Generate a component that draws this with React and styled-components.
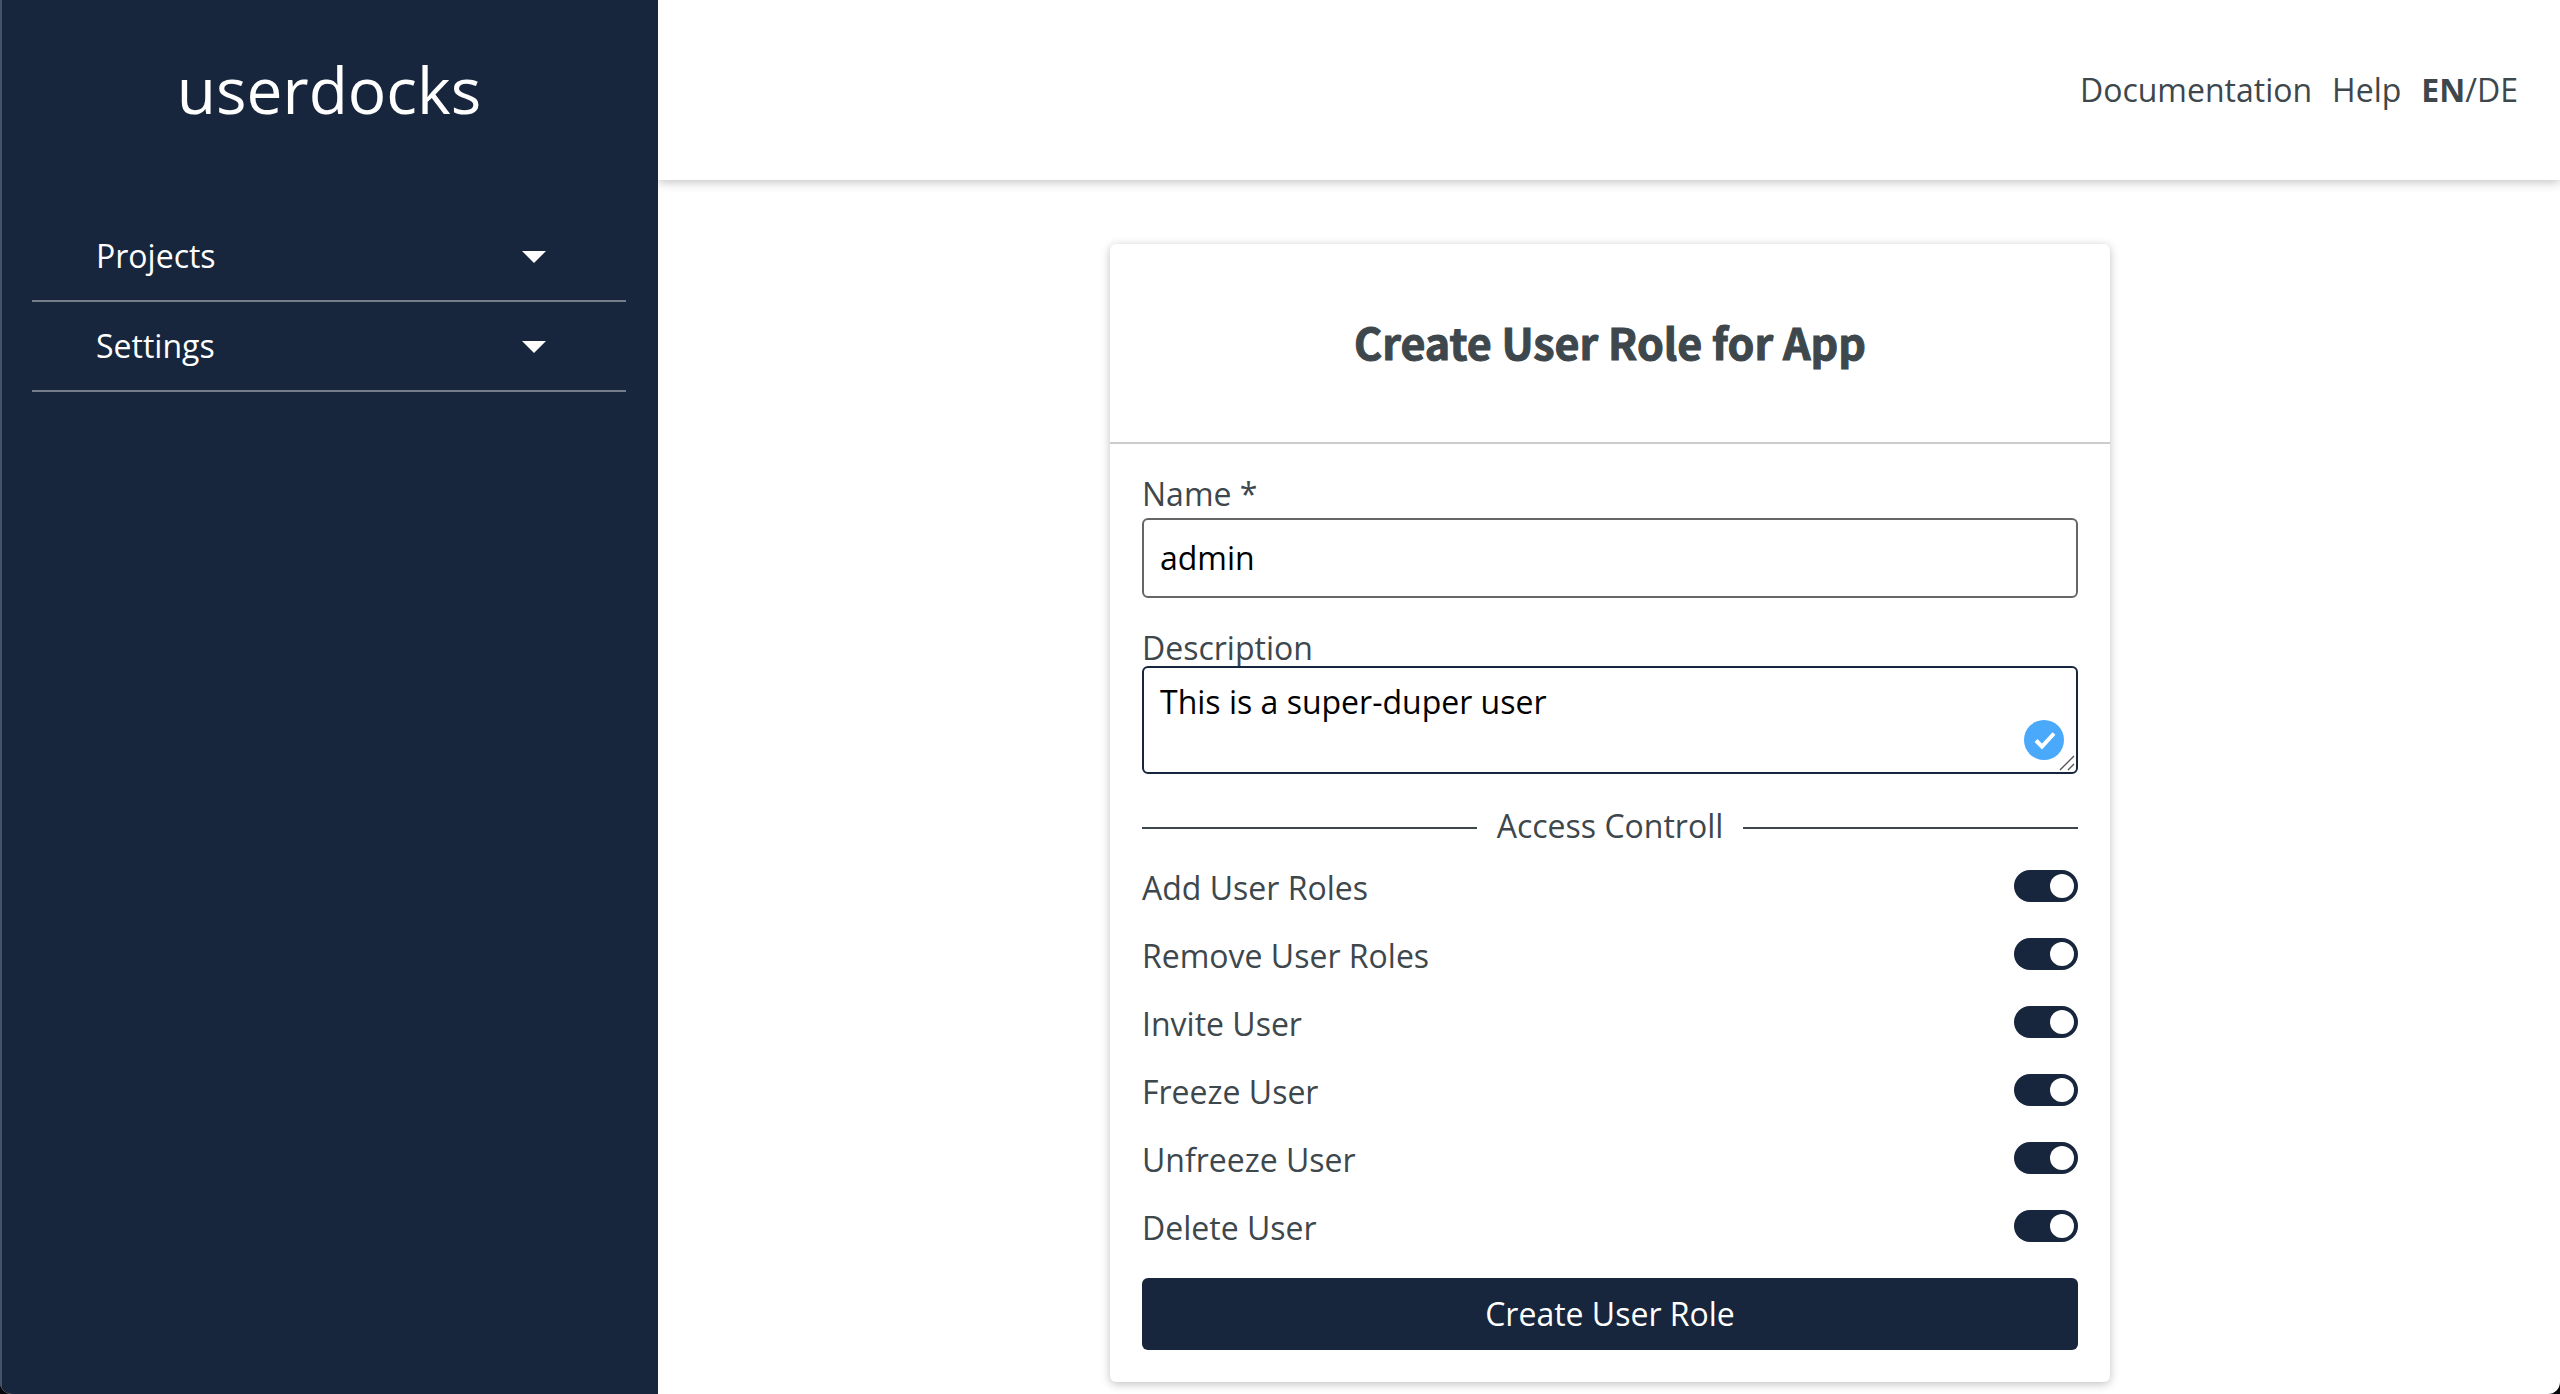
import React, { useId, useState } from "react";
import styled, { createGlobalStyle } from "styled-components";

const navy = "#17263c";
const slate = "#3d474c";

const GlobalStyle = createGlobalStyle`
  *, *::before, *::after { box-sizing: border-box; }
  body {
    margin: 0;
    background: #05070c;
    color: ${slate};
    font-family: "Open Sans", "Noto Sans", sans-serif;
    font-size: 32px;
    line-height: 44px;
  }
  button, input, textarea { font: inherit; }
`;

const Page = styled.div`
  display: grid;
  grid-template-columns: 658px 1fr;
  min-height: 100vh;
  overflow: hidden;
  border-radius: 0 0 12px 12px;
  background: #fff;
`;

const Sidebar = styled.aside`
  background: ${navy};
  border-left: 2px solid #465265;
  padding: 0 32px 0 30px;
  color: #fff;
`;

const Logo = styled.a`
  display: flex;
  align-items: center;
  justify-content: center;
  height: 180px;
  margin-bottom: 32px;
  font-size: 64px;
  color: #fff;
  text-decoration: none;
`;

const NavItem = styled.button`
  display: flex;
  align-items: center;
  justify-content: space-between;
  width: 100%;
  height: 90px;
  padding: 0 80px 0 64px;
  border: 0;
  border-bottom: 2px solid #747d8a;
  background: none;
  color: #fff;
  cursor: pointer;
`;

const Caret = styled.span`
  margin-top: 2px;
  border: 12px solid transparent;
  border-top-color: #fff;
  border-bottom-width: 0;
`;

const Content = styled.div`
  display: flex;
  flex-direction: column;
  min-width: 0;
`;

const Header = styled.header`
  display: flex;
  align-items: center;
  justify-content: flex-end;
  gap: 20px;
  height: 180px;
  padding: 0 42px;
  box-shadow: 0 2px 10px rgba(0, 0, 0, 0.25);
  clip-path: inset(0 0 -20px 0);
`;

const HeaderLink = styled.a`
  color: inherit;
  text-decoration: none;
`;

const LanguageButton = styled.button`
  padding: 0;
  border: 0;
  background: none;
  color: inherit;
  font-weight: ${(p) => (p.$active ? 700 : 400)};
  cursor: pointer;
`;

const Main = styled.main`
  display: flex;
  justify-content: center;
  padding: 64px 32px 12px 34px;
`;

const Card = styled.form`
  width: 1000px;
  max-width: 100%;
  border-radius: 6px;
  box-shadow: 0 2px 10px rgba(0, 0, 0, 0.25);
`;

const CardHeader = styled.div`
  display: flex;
  align-items: center;
  justify-content: center;
  height: 200px;
  padding-bottom: 4px;
  border-bottom: 2px solid #ccc;
`;

const Title = styled.h1`
  margin: 0;
  font-family: "Noto Sans CJK SC", sans-serif;
  font-size: 43px;
  line-height: 64px;
  font-weight: 700;
  -webkit-text-stroke: 1px ${slate};
`;

const CardBody = styled.div`
  display: flex;
  flex-direction: column;
  padding: 28px 32px 32px;
`;

const Label = styled.label`
  height: ${(p) => p.$height}px;
`;

const TextInput = styled.input`
  height: 80px;
  margin-bottom: 28px;
  padding: 0 16px 2px;
  border: 2px solid #666;
  border-radius: 6px;
  background: #fff;
  color: #000;
  outline: 0;
`;

const TextAreaWrap = styled.div`
  position: relative;
  display: flex;
`;

const TextArea = styled.textarea`
  width: 100%;
  height: 108px;
  padding: 12px 16px;
  border: 2px solid ${navy};
  border-radius: 6px;
  background: #fff;
  color: #000;
  outline: 0;
  resize: none;
`;

const CheckBadge = styled.svg`
  position: absolute;
  right: 14px;
  bottom: 14px;
  width: 40px;
  height: 40px;
`;

const Grip = styled.svg`
  position: absolute;
  right: 3px;
  bottom: 3px;
  width: 16px;
  height: 16px;
`;

const Divider = styled.div`
  display: flex;
  align-items: center;
  gap: 20px;
  margin: 30px 0 18px;

  &::before, &::after {
    content: "";
    flex: 1;
    height: 2px;
    margin-top: 4px;
    background: ${slate};
  }
`;

const SwitchRow = styled.div`
  display: flex;
  align-items: flex-start;
  justify-content: space-between;
  height: 68px;
`;

const Switch = styled.input`
  appearance: none;
  display: flex;
  align-items: center;
  width: 64px;
  height: 32px;
  margin: 4px 0 0;
  padding: 0 4px;
  border-radius: 16px;
  background: ${navy};
  cursor: pointer;

  &::before {
    content: "";
    width: 24px;
    height: 24px;
    border-radius: 50%;
    background: #fff;
  }
  &:checked::before { margin-left: auto; }
  &:not(:checked) { background: #999; }
`;

const SubmitButton = styled.button`
  height: 72px;
  margin-top: 4px;
  border: 0;
  border-radius: 6px;
  background: ${navy};
  color: #fff;
  cursor: pointer;
`;

const permissions = [
  "Add User Roles",
  "Remove User Roles",
  "Invite User",
  "Freeze User",
  "Unfreeze User",
  "Delete User",
];

function PermissionSwitch({ label }) {
  const id = useId();
  const [on, setOn] = useState(true);
  return (
    <SwitchRow>
      <label htmlFor={id}>{label}</label>
      <Switch id={id} type="checkbox" role="switch" checked={on} onChange={(e) => setOn(e.target.checked)} />
    </SwitchRow>
  );
}

export default function App() {
  return (
    <>
      <GlobalStyle />
      <Page>
        <Sidebar>
          <Logo href="#">userdocks</Logo>
          <nav>
            {["Projects", "Settings"].map((item) => (
              <NavItem key={item} type="button">
                {item}
                <Caret />
              </NavItem>
            ))}
          </nav>
        </Sidebar>
        <Content>
          <Header>
            <HeaderLink href="#">Documentation</HeaderLink>
            <HeaderLink href="#">Help</HeaderLink>
            <div>
              <LanguageButton type="button" $active>EN</LanguageButton>/<LanguageButton type="button">DE</LanguageButton>
            </div>
          </Header>
          <Main>
            <Card onSubmit={(e) => e.preventDefault()}>
              <CardHeader>
                <Title>Create User Role for App</Title>
              </CardHeader>
              <CardBody>
                <Label htmlFor="name" $height={46}>Name *</Label>
                <TextInput id="name" type="text" defaultValue="admin" />
                <Label htmlFor="description" $height={40}>Description</Label>
                <TextAreaWrap>
                  <TextArea id="description" spellCheck={false} defaultValue="This is a super-duper user" />
                  <CheckBadge viewBox="0 0 40 40" aria-hidden="true">
                    <circle cx="20" cy="20" r="20" fill="#4aa9fa" />
                    <path d="M12 20.5 18 26.5 30 13.5" fill="none" stroke="#fff" strokeWidth="4" />
                  </CheckBadge>
                  <Grip viewBox="0 0 16 16" aria-hidden="true">
                    <path d="M1 15 15 1M9 15 15 9" stroke="#555" strokeWidth="1.4" />
                  </Grip>
                </TextAreaWrap>
                <Divider>Access Controll</Divider>
                {permissions.map((label) => (
                  <PermissionSwitch key={label} label={label} />
                ))}
                <SubmitButton type="submit">Create User Role</SubmitButton>
              </CardBody>
            </Card>
          </Main>
        </Content>
      </Page>
    </>
  );
}
